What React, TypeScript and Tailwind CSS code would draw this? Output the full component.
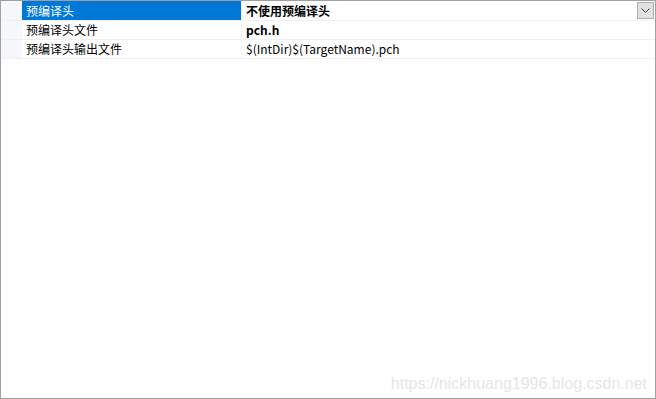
export default function App() {
  const rows = [
    { label: '预编译头', value: '不使用预编译头', bold: true, selected: true },
    { label: '预编译头文件', value: 'pch.h', bold: true, selected: false },
    { label: '预编译头输出文件', value: '$(IntDir)$(TargetName).pch', bold: false, selected: false },
  ]

  return (
    <div
      className="w-[656px] h-[399px] bg-white border border-[#a0a0a0] flex flex-col text-[12px] text-black"
      style={{ fontFamily: '"Microsoft YaHei UI", "Noto Sans CJK SC", "Noto Sans", sans-serif' }}
    >
      <div className="flex flex-col">
        {rows.map((row, index) => (
          <div
            key={index}
            className={`flex border-b border-[#f0f0f0] ${index === 0 ? 'h-[20px]' : 'h-[19px]'}`}
          >
            <div className="w-[21px] bg-[#f5f7fb]" />
            <div
              className={`w-[219px] flex items-center pl-[4px] leading-none ${
                row.selected ? 'bg-[#0078d7] text-white' : ''
              }`}
            >
              {row.label}
            </div>
            <div className="flex-1 flex items-center pl-[4px] border-l border-[#f0f0f0] leading-none">
              <span className={row.bold ? 'font-bold' : ''}>{row.value}</span>
              {row.selected && (
                <div className="ml-auto mr-[1px] w-[17px] h-[17px] bg-[#e1e1e1] border border-[#adadad] flex items-center justify-center">
                  <svg width="9" height="6" viewBox="0 0 9 6">
                    <path d="M0.5 0.5 L4.5 4.5 L8.5 0.5" fill="none" stroke="#404040" strokeWidth="1" />
                  </svg>
                </div>
              )}
            </div>
          </div>
        ))}
      </div>
      <div className="flex-1 flex items-end justify-end pr-[8px] pb-[6px]">
        <span
          className="text-[16px] text-[#e6e6e6] leading-none"
          style={{ fontFamily: '"Liberation Sans", Arial, sans-serif' }}
        >
          https://nickhuang1996.blog.csdn.net
        </span>
      </div>
    </div>
  )
}
